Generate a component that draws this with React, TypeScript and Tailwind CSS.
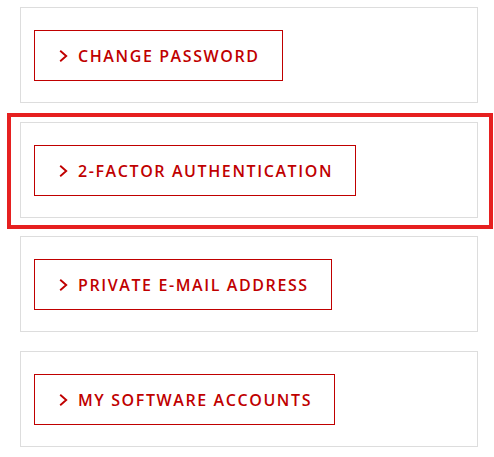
import React from "react";

function Chevron() {
  return (
    <svg width="9" height="12" viewBox="0 0 9 12" className="shrink-0" aria-hidden>
      <path d="M1.2 0.8 L7.2 6 L1.2 11.2" fill="none" stroke="#c00000" strokeWidth="1.9" strokeLinejoin="miter" />
    </svg>
  );
}

function ActionButton({ label }: { label: string }) {
  return (
    <a
      href="#"
      className="inline-flex h-[51px] items-center gap-[10px] border border-[#c00000] pl-[24px] pr-[22px] text-[16px] font-semibold uppercase tracking-[1.6px] text-[#c00000]"
      style={{ fontFamily: '"Open Sans", "Liberation Sans", sans-serif' }}
    >
      <Chevron />
      <span className="leading-none">{label}</span>
    </a>
  );
}

function Card({ label, className = "" }: { label: string; className?: string }) {
  return (
    <div className={`w-[458px] border border-[#dddddd] bg-white pl-[13px] pt-[22px] pb-[21px] ${className}`}>
      <ActionButton label={label} />
    </div>
  );
}

export default function App() {
  return (
    <div className="min-h-[457px] w-[494px] bg-white pl-[20px] pt-[7px]">
      <Card label="Change Password" />
      <div className="relative mt-[19px] w-[458px]">
        <Card label="2-Factor Authentication" />
        <div className="pointer-events-none absolute -top-[9px] -left-[13px] -right-[15px] -bottom-[11px] border-4 border-[#e62020]" />
      </div>
      <Card label="Private E-mail Address" className="mt-[18px]" />
      <Card label="My Software Accounts" className="mt-[19px]" />
    </div>
  );
}
